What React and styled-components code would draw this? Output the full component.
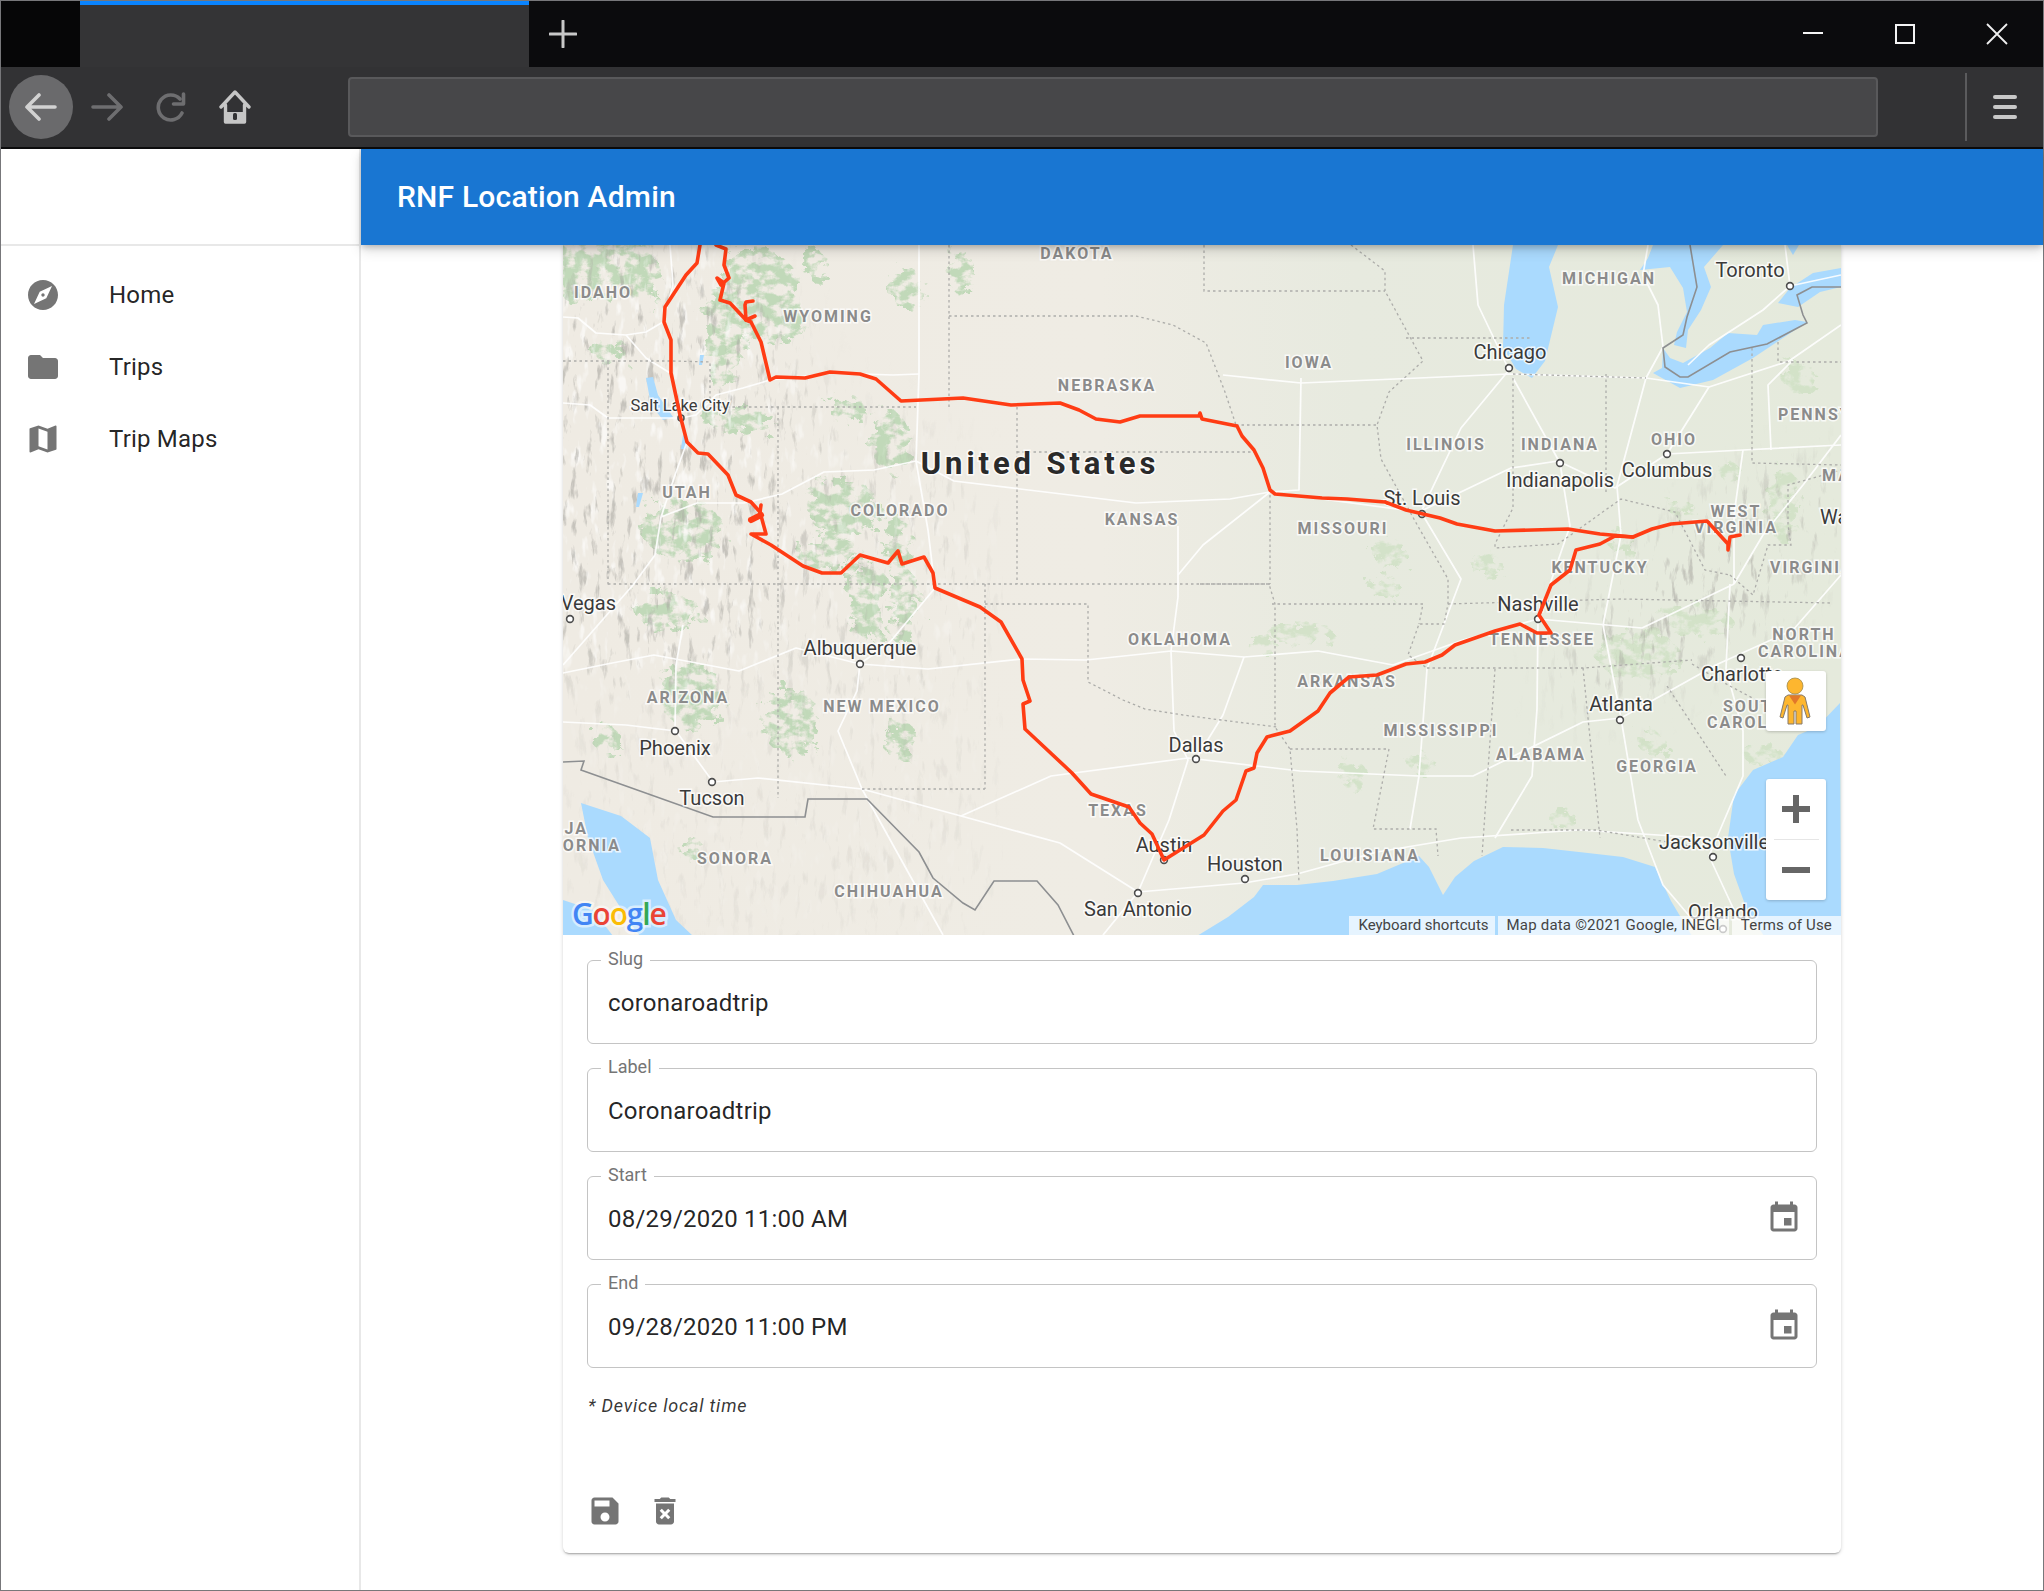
import React from 'react';
import styled, { createGlobalStyle } from 'styled-components';

const GlobalStyle = createGlobalStyle`
  html, body { margin: 0; padding: 0; background: #fff; overflow: hidden; }
  * { box-sizing: border-box; }
  body { font-family: Roboto, "Liberation Sans", sans-serif; }
`;

const Win = styled.div`
  width: 2044px;
  height: 1591px;
  display: flex;
  flex-direction: column;
  border: 1px solid #77777a;
  background: #fff;
`;

const TabBar = styled.div`
  height: 66px;
  display: flex;
  background: #0b0b0d;
`;

const TabGap = styled.div`
  width: 79px;
  background: #060607;
`;

const Tab = styled.div`
  width: 449px;
  background: #343436;
  border-top: 4px solid #0a84ff;
`;

const PlusBtn = styled.div`
  width: 68px;
  display: flex;
  align-items: center;
  justify-content: center;
`;

const TabSpacer = styled.div`
  flex: 1;
`;

const WinBtn = styled.div`
  width: 92px;
  display: flex;
  align-items: center;
  justify-content: center;
`;

const ToolBar = styled.div`
  height: 80px;
  display: flex;
  align-items: center;
  background: #323234;
  padding-left: 8px;
`;

const BackBtn = styled.div`
  width: 64px;
  height: 64px;
  border-radius: 50%;
  background: #6a6a6c;
  display: flex;
  align-items: center;
  justify-content: center;
  margin-right: 2px;
`;

const NavBtn = styled.div`
  width: 64px;
  height: 64px;
  display: flex;
  align-items: center;
  justify-content: center;
`;

const UrlBar = styled.div`
  flex: 1;
  height: 60px;
  margin-left: 81px;
  background: #474749;
  border: 2px solid #59595b;
  border-radius: 4px;
`;

const ToolSep = styled.div`
  width: 2px;
  height: 68px;
  margin-left: 87px;
  background: #5b5b5d;
`;

const MenuBtn = styled.div`
  width: 76px;
  display: flex;
  flex-direction: column;
  align-items: center;
  gap: 6px;
`;

const MenuLine = styled.span`
  width: 24px;
  height: 4px;
  border-radius: 2px;
  background: #c8c8c8;
`;

const ChromeEdge = styled.div`
  height: 2px;
  background: #0c0c0d;
`;

const Body = styled.div`
  flex: 1;
  display: flex;
  min-height: 0;
`;

const Sidebar = styled.aside`
  width: 360px;
  flex-shrink: 0;
  border-right: 2px solid #e8e8e8;
`;

const SideHead = styled.div`
  height: 97px;
  border-bottom: 2px solid #e8e8e8;
`;

const NavList = styled.nav`
  padding-top: 13px;
`;

const NavItem = styled.div`
  height: 72px;
  display: flex;
  align-items: center;
  padding-left: 24px;
  color: rgba(0, 0, 0, 0.87);
  font-size: 24px;
  letter-spacing: 0.2px;
`;

const NavIcon = styled.div`
  width: 84px;
  height: 36px;
  color: #757575;
`;

const Main = styled.main`
  flex: 1;
  min-width: 0;
  display: flex;
  flex-direction: column;
`;

const AppBar = styled.header`
  height: 96px;
  flex-shrink: 0;
  display: flex;
  align-items: center;
  padding: 0 0 2px 36px;
  background: #1976d2;
  color: #fff;
  font-size: 30px;
  font-weight: 500;
  letter-spacing: 0.2px;
  box-shadow: 0 3px 6px -1px rgba(0, 0, 0, 0.22), 0 6px 12px 0 rgba(0, 0, 0, 0.12);
  position: relative;
  z-index: 2;
`;

const Card = styled.section`
  width: 1278px;
  margin: 0 auto;
  border-radius: 0 0 6px 6px;
  box-shadow: 0 2px 2px -1px rgba(0, 0, 0, 0.3), 0 1px 4px 0 rgba(0, 0, 0, 0.14);
`;

const MapWrap = styled.div`
  position: relative;
  height: 690px;
  overflow: hidden;
`;

const MapSvg = styled.svg`
  display: block;
  width: 1278px;
  height: 690px;
`;

const StateName = styled.text`
  font-family: Roboto, sans-serif;
  font-size: 16px;
  font-weight: 700;
  letter-spacing: 2px;
  fill: #8b8b8b;
  stroke: rgba(255, 255, 255, 0.75);
  stroke-width: 3px;
  paint-order: stroke;
`;

const CityName = styled.text`
  font-family: Roboto, sans-serif;
  font-size: ${(p) => p.$size || 20}px;
  fill: #3a3a3a;
  stroke: rgba(255, 255, 255, 0.8);
  stroke-width: 3px;
  paint-order: stroke;
`;

const CountryName = styled.text`
  font-family: Roboto, sans-serif;
  font-size: 31px;
  font-weight: 700;
  letter-spacing: 3.9px;
  fill: #2a2a2a;
  stroke: rgba(255, 255, 255, 0.8);
  stroke-width: 3px;
  paint-order: stroke;
`;

const GoogleMark = styled.text`
  font-family: "Open Sans", Roboto, sans-serif;
  font-size: 30px;
  font-weight: 600;
  letter-spacing: -1.2px;
  stroke: rgba(255, 255, 255, 0.55);
  stroke-width: 5px;
  paint-order: stroke;
`;

const MapControl = styled.div`
  position: absolute;
  right: 15px;
  width: 60px;
  background: #fff;
  border-radius: 3px;
  box-shadow: 0 1px 3px rgba(0, 0, 0, 0.2);
`;

const PegBox = styled(MapControl)`
  top: 426px;
  height: 60px;
`;

const ZoomBox = styled(MapControl)`
  top: 534px;
  height: 121px;
  display: flex;
  flex-direction: column;
  align-items: center;
`;

const ZoomBtn = styled.div`
  height: 60px;
  display: flex;
  align-items: center;
  justify-content: center;
`;

const ZoomSep = styled.div`
  width: 45px;
  height: 1px;
  background: #e6e6e6;
`;

const Attribution = styled.div`
  position: absolute;
  right: 0;
  bottom: 0;
  height: 19px;
  display: flex;
  gap: 3px;
  font-size: 15px;
  line-height: 19px;
  letter-spacing: 0.2px;
  color: #444;
`;

const AttrItem = styled.span`
  padding: 0 9px;
  background: rgba(255, 255, 255, 0.7);
  white-space: nowrap;
`;

const ShortcutsItem = styled(AttrItem)`
  padding-right: 6px;
  letter-spacing: 0;
`;

const Form = styled.div`
  padding: 25px 24px 24px;
  display: flex;
  flex-direction: column;
  gap: 24px;
`;

const Field = styled.div`
  position: relative;
  height: 84px;
  padding: 0 14px 0 20px;
  display: flex;
  align-items: center;
  justify-content: space-between;
  border: 1.5px solid #c4c4c4;
  border-radius: 6px;
`;

const FieldLabel = styled.label`
  position: absolute;
  top: -14px;
  left: 13px;
  padding: 0 7px;
  background: #fff;
  font-size: 18px;
  line-height: 24px;
  color: #757575;
`;

const FieldValue = styled.div`
  position: relative;
  top: 1px;
  font-size: 24px;
  letter-spacing: 0.22px;
  color: rgba(0, 0, 0, 0.87);
`;

const Note = styled.div`
  height: 27px;
  padding-left: 1px;
  font-size: 18px;
  line-height: 27px;
  font-style: italic;
  letter-spacing: 0.8px;
  color: rgba(0, 0, 0, 0.8);
`;

const Actions = styled.div`
  display: flex;
  gap: 24px;
  margin-top: 50px;
`;

const Icon = styled.svg`
  display: block;
  width: 36px;
  height: 36px;
  fill: #757575;
`;

const MaterialIcon = ({ d }) => (
  <Icon viewBox="0 0 24 24">
    <path d={d} />
  </Icon>
);

const ICONS = {
  explore: 'M12 10.9c-.61 0-1.1.49-1.1 1.1s.49 1.1 1.1 1.1c.61 0 1.1-.49 1.1-1.1s-.49-1.1-1.1-1.1zM12 2C6.48 2 2 6.48 2 12s4.48 10 10 10 10-4.48 10-10S17.52 2 12 2zm2.19 12.19L6 18l3.81-8.19L18 6l-3.81 8.19z',
  folder: 'M10 4H4c-1.1 0-1.99.9-1.99 2L2 18c0 1.1.9 2 2 2h16c1.1 0 2-.9 2-2V8c0-1.1-.9-2-2-2h-8l-2-2z',
  map: 'M20.5 3l-.16.03L15 5.1 9 3 3.36 4.9c-.21.07-.36.25-.36.48V20.5c0 .28.22.5.5.5l.16-.03L9 18.9l6 2.1 5.64-1.9c.21-.07.36-.25.36-.48V3.5c0-.28-.22-.5-.5-.5zM15 19l-6-2.11V5l6 2.11V19z',
  event: 'M17 12h-5v5h5v-5zM16 1v2H8V1H6v2H5c-1.11 0-1.99.9-1.99 2L3 19c0 1.1.89 2 2 2h14c1.1 0 2-.9 2-2V5c0-1.1-.9-2-2-2h-1V1h-2zm3 18H5V8h14v11z',
  save: 'M17 3H5c-1.11 0-2 .9-2 2v14c0 1.1.89 2 2 2h14c1.1 0 2-.9 2-2V7l-4-4zm-5 16c-1.66 0-3-1.34-3-3s1.34-3 3-3 3 1.34 3 3-1.34 3-3 3zm3-10H5V5h10v4z',
  deleteForever: 'M6 19c0 1.1.9 2 2 2h8c1.1 0 2-.9 2-2V7H6v12zm2.46-7.12l1.41-1.41L12 12.59l2.12-2.12 1.41 1.41L13.41 14l2.12 2.12-1.41 1.41L12 15.41l-2.12 2.12-1.41-1.41L10.59 14l-2.13-2.12zM15.5 4l-1-1h-5l-1 1H5v2h14V4z',
};

const line = (pts) => 'M' + pts.map((p) => p.join(' ')).join('L');
const shape = (pts) => line(pts) + 'Z';

const WATER = [
  // gulf of mexico and atlantic
  [[520, 690], [600, 690], [634, 691], [665, 672], [691, 652], [700, 640], [734, 640], [770, 636], [814, 629], [840, 618], [856, 611], [866, 622], [880, 650], [892, 632], [911, 616], [940, 602], [980, 603], [1016, 607], [1060, 612], [1092, 622], [1108, 656], [1129, 691], [1201, 691], [1184, 665], [1171, 629], [1165, 593], [1171, 550], [1190, 525], [1220, 512], [1235, 490], [1254, 482], [1277, 458], [1278, 690], [1278, 700], [520, 700]],
  // gulf of california
  [[18, 558], [58, 571], [87, 593], [95, 635], [113, 675], [130, 691], [77, 691], [67, 678], [40, 635], [25, 593]],
  // pacific corner
  [[0, 655], [30, 665], [50, 691], [0, 691]],
  // lake michigan
  [[950, 0], [941, 60], [940, 102], [953, 124], [969, 133], [982, 116], [995, 62], [986, 22], [995, 0]],
  // lake huron
  [[1090, 0], [1085, 13], [1077, 25], [1107, 22], [1120, 43], [1124, 67], [1114, 87], [1111, 100], [1123, 103], [1125, 85], [1138, 65], [1148, 42], [1141, 22], [1160, 0]],
  // lake erie
  [[1100, 103], [1099, 123], [1090, 128], [1117, 143], [1150, 135], [1190, 113], [1244, 77], [1232, 75], [1200, 80], [1194, 90], [1165, 88], [1147, 103], [1120, 118], [1107, 113]],
  // lake ontario
  [[1278, 23], [1250, 28], [1227, 43], [1215, 58], [1235, 62], [1257, 47], [1278, 42]],
  // georgian bay sliver
  [[1224, 0], [1236, 0], [1230, 10]],
  // great salt lake and small western lakes
  [[83, 133], [90, 132], [95, 150], [110, 172], [100, 175], [88, 160]],
  [[120, 190], [124, 192], [123, 204], [118, 204]],
  [[75, 248], [80, 248], [76, 262], [73, 262]],
  [[137, 110], [141, 110], [139, 120], [136, 120]],
];

const GREENS = [
  [30, 20, 44, 30], [78, 25, 18, 32], [14, 48, 16, 10], [165, 80, 24, 46], [195, 38, 38, 34], [215, 72, 26, 28],
  [157, 112, 12, 34], [40, 105, 11, 10], [58, 106, 6, 10], [175, 175, 36, 13], [285, 165, 18, 13], [327, 196, 19, 30],
  [280, 263, 36, 28], [266, 308, 32, 18], [304, 343, 20, 24], [342, 352, 14, 28], [304, 375, 16, 24], [337, 379, 10, 20],
  [120, 285, 40, 30], [105, 366, 32, 18], [129, 450, 32, 32], [228, 477, 28, 34], [337, 495, 16, 20], [44, 495, 10, 16],
  [344, 44, 18, 20], [398, 26, 12, 24], [252, 20, 10, 16], [130, 605, 10, 12], [335, 300, 12, 28],
];

const EAST_GREENS = [
  [826, 308, 16, 15], [822, 343, 16, 11], [923, 320, 16, 11], [738, 388, 32, 10], [1075, 410, 40, 26], [1134, 375, 34, 16],
  [1220, 260, 15, 38], [1120, 265, 12, 10], [1167, 227, 10, 10], [1237, 133, 16, 15], [700, 400, 14, 8], [860, 520, 12, 10],
  [1000, 575, 14, 9], [1090, 500, 12, 12], [790, 530, 14, 14], [1200, 510, 20, 10], [1060, 300, 12, 10],
];

const BORDERS = [
  [[0, 116], [110, 116], [147, 117], [147, 162], [215, 162], [353, 162]],
  [[45, 117], [45, 340]],
  [[45, 339], [707, 339]],
  [[215, 162], [215, 553]],
  [[386, 0], [386, 162]],
  [[386, 71], [573, 71], [610, 80], [643, 98], [662, 147], [673, 180]],
  [[454, 162], [454, 339]],
  [[454, 207], [691, 207]],
  [[707, 250], [707, 339]],
  [[422, 339], [422, 544]],
  [[422, 359], [525, 359], [525, 437], [560, 455], [582, 464], [620, 470], [658, 475], [714, 482]],
  [[299, 544], [422, 544]],
  [[641, 0], [641, 46], [822, 46]],
  [[637, 339], [706, 339], [712, 359], [712, 482], [727, 504], [734, 584], [736, 638]],
  [[727, 504], [826, 504], [810, 584], [873, 584], [875, 611]],
  [[932, 424], [919, 611]],
  [[864, 423], [1020, 423], [1129, 415]],
  [[673, 180], [814, 180], [818, 214], [852, 276], [885, 334], [885, 359], [881, 379], [856, 379], [845, 410], [864, 423]],
  [[709, 359], [860, 359], [856, 379]],
  [[885, 359], [1058, 354], [1268, 358]],
  [[950, 133], [950, 263], [932, 299], [932, 303], [995, 299], [1058, 254], [1112, 267], [1142, 325], [1167, 330]],
  [[1043, 129], [1043, 250]],
  [[950, 129], [1083, 133]],
  [[1189, 103], [1189, 218], [1278, 220]],
  [[1215, 97], [1215, 117], [1278, 117]],
  [[843, 93], [967, 93]],
  [[788, 0], [822, 26], [822, 46], [860, 116], [826, 147], [814, 180]],
  [[1020, 423], [1037, 593]],
  [[948, 585], [1033, 585], [1134, 602]],
  [[1104, 441], [1163, 531]],
  [[1129, 419], [1165, 440], [1225, 472]],
  [[1167, 330], [1190, 350], [1205, 300], [1228, 300], [1225, 280], [1225, 240], [1278, 225]],
];

const FRONTIERS = [
  [[1127, 0], [1134, 42], [1124, 72], [1120, 90], [1100, 103], [1102, 122], [1117, 132], [1125, 132], [1167, 107], [1204, 99], [1244, 78], [1240, 70], [1234, 50], [1249, 42], [1278, 42]],
  [[0, 517], [21, 516], [18, 525], [150, 572], [242, 572], [245, 554], [304, 554], [356, 607], [370, 633], [400, 658], [412, 665], [431, 636], [474, 636], [495, 660], [511, 691]],
];

const ROADS = [
  [[0, 72], [15, 73], [33, 88], [63, 90], [83, 87], [100, 77], [110, 40], [107, 0]],
  [[63, 90], [83, 113], [107, 128], [118, 173]],
  [[0, 158], [27, 160], [45, 173], [83, 173], [118, 173], [133, 170], [153, 150], [180, 143], [207, 135], [270, 128], [330, 130], [356, 129]],
  [[118, 173], [124, 197], [112, 230], [98, 272], [134, 258], [181, 258], [219, 249], [261, 227], [311, 225], [353, 216], [391, 236], [507, 250], [573, 258], [667, 254], [707, 247], [856, 267], [948, 223], [995, 216], [1052, 243], [1104, 209], [1180, 205], [1278, 200]],
  [[98, 272], [92, 310], [70, 340], [0, 420]],
  [[356, 0], [356, 129], [353, 216], [365, 285], [372, 343], [327, 397], [297, 419], [294, 446], [275, 486], [299, 544]],
  [[0, 428], [44, 419], [91, 410], [176, 426], [233, 403], [297, 419], [365, 424], [459, 414], [523, 415], [608, 406], [681, 412], [755, 406], [830, 420], [900, 395], [975, 374], [1079, 383], [1171, 339]],
  [[0, 477], [63, 480], [113, 486], [150, 537], [195, 533], [299, 544], [398, 571], [488, 531], [625, 513], [737, 526], [856, 531], [910, 531], [1020, 477], [1058, 473], [1155, 419], [1230, 385], [1278, 330]],
  [[398, 571], [497, 598], [575, 647], [681, 638], [734, 629], [814, 607], [898, 593], [1016, 585], [1142, 593]],
  [[615, 281], [615, 352], [608, 406], [611, 486], [625, 515], [606, 575], [575, 647], [540, 690]],
  [[707, 247], [640, 300], [615, 330]],
  [[946, 125], [898, 183], [858, 267], [898, 334], [864, 424], [856, 531], [847, 584]],
  [[738, 138], [856, 133], [946, 129], [1083, 133], [1146, 142], [1226, 116], [1278, 80]],
  [[660, 130], [738, 138]],
  [[1083, 133], [1100, 102], [1095, 60], [1080, 30], [1085, 0]],
  [[1083, 133], [1054, 241], [1058, 290], [1040, 380], [1058, 473], [1075, 575], [1100, 640], [1134, 680]],
  [[950, 133], [997, 218], [1007, 281], [975, 374], [974, 464], [969, 531], [932, 593]],
  [[1167, 339], [1163, 424], [1180, 486], [1180, 531], [1146, 611], [1171, 665]],
  [[738, 133], [736, 245], [707, 247]],
  [[946, 125], [915, 60], [910, 0]],
  [[1104, 209], [1146, 142]],
  [[1227, 41], [1200, 65], [1146, 100], [1125, 120]],
  [[1278, 30], [1227, 41], [1222, 0]],
  [[1208, 205], [1205, 140], [1230, 115]],
  [[1171, 339], [1200, 290], [1240, 240], [1278, 190]],
  [[1171, 339], [1171, 270], [1180, 205]],
  [[681, 412], [660, 470], [633, 514]],
  [[299, 544], [330, 600], [380, 690]],
  [[112, 486], [113, 420], [120, 380]],
];

const ROUTE = [
  [[137, 0], [134, 18], [123, 30], [102, 62], [101, 77], [108, 95], [108, 128], [117, 170], [124, 197], [135, 208], [145, 209], [165, 230], [173, 250], [188, 257], [197, 267], [203, 289], [188, 289], [208, 300], [240, 321], [259, 328], [278, 328], [297, 310], [325, 318], [335, 306], [339, 319], [361, 312], [370, 328], [372, 343], [417, 362], [438, 377], [459, 414], [460, 435], [467, 456], [460, 459], [462, 484], [509, 528], [528, 549], [566, 562], [577, 578], [589, 589], [601, 615], [641, 590], [660, 566], [673, 555], [683, 526], [691, 523], [694, 508], [704, 492], [727, 486], [755, 466], [767, 448], [786, 432], [814, 430], [843, 419], [862, 417], [879, 410], [892, 400], [932, 386], [957, 379], [974, 388], [988, 388], [976, 370], [988, 340], [1007, 325], [1013, 305], [1037, 299], [1052, 291], [1070, 292]],
  [[153, 0], [163, 4], [161, 20], [166, 33], [158, 40], [154, 33], [161, 38], [157, 55], [167, 58], [183, 75], [188, 77], [198, 97], [207, 135], [213, 132], [242, 133], [267, 127], [297, 129], [313, 134], [338, 156], [400, 153], [448, 160], [497, 158], [516, 165], [533, 174], [557, 177], [577, 171], [636, 171], [637, 168], [639, 174], [674, 181], [679, 191], [691, 205], [700, 223], [707, 245], [712, 249], [759, 253], [784, 254], [822, 257], [843, 265], [877, 273], [894, 279], [932, 286], [1005, 284], [1037, 289], [1070, 292], [1089, 284], [1108, 279], [1144, 276], [1165, 299], [1165, 305], [1167, 292], [1177, 290]],
  [[183, 75], [182, 60], [183, 57], [190, 56]],
  [[183, 75], [192, 71]],
  [[188, 275], [198, 270]],
  [[197, 267], [198, 260]],
];

const CITIES = [
  ['Toronto', 1187, 25, 1227, 41],
  ['Chicago', 947, 107, 946, 123],
  ['Columbus', 1104, 225, 1104, 209],
  ['Indianapolis', 997, 235, 997, 218],
  ['St. Louis', 859, 253, 859, 269],
  ['Nashville', 975, 359, 975, 374],
  ['Albuquerque', 297, 403, 297, 419],
  ['Atlanta', 1058, 459, 1057, 475],
  ['Phoenix', 112, 503, 112, 486],
  ['Dallas', 633, 500, 633, 514],
  ['Tucson', 149, 553, 149, 537],
  ['Austin', 601, 600, 601, 615],
  ['Jacksonville', 1151, 597, 1150, 612],
  ['Houston', 682, 619, 682, 634],
  ['San Antonio', 575, 664, 575, 648],
  ['Orlando', 1160, 667, 1160, 684],
];

const STATES = [
  ['DAKOTA', 514, 8], ['IDAHO', 40, 47], ['WYOMING', 265, 71], ['NEBRASKA', 544, 140], ['IOWA', 746, 117],
  ['MICHIGAN', 1046, 33], ['ILLINOIS', 883, 199], ['INDIANA', 997, 199], ['OHIO', 1111, 194], ['UTAH', 124, 247],
  ['COLORADO', 337, 265], ['KANSAS', 579, 274], ['MISSOURI', 780, 283], ['WEST', 1173, 266], ['VIRGINIA', 1173, 282],
  ['KENTUCKY', 1037, 322], ['TENNESSEE', 979, 394], ['NORTH', 1241, 389], ['OKLAHOMA', 617, 394], ['ARKANSAS', 784, 436],
  ['ARIZONA', 125, 452], ['NEW MEXICO', 319, 461], ['MISSISSIPPI', 878, 485], ['ALABAMA', 978, 509], ['GEORGIA', 1094, 521],
  ['TEXAS', 555, 565], ['SONORA', 172, 613], ['LOUISIANA', 807, 610], ['CHIHUAHUA', 326, 646],
];

const STATES_CUT = [
  ['PENNSYLVANIA', 1215, 169], ['MARYLAND', 1259, 230], ['VIRGINIA', 1207, 322], ['CAROLINA', 1195, 406],
  ['SOUTH', 1160, 461], ['CAROLINA', 1144, 477],
];

const RoadMap = () => (
  <MapSvg viewBox="0 0 1278 690">
    <defs>
      <linearGradient id="land" x1="0" x2="1" y1="0" y2="0">
        <stop offset="0" stopColor="#efebe3" />
        <stop offset="0.42" stopColor="#efece4" />
        <stop offset="0.62" stopColor="#e7eadf" />
        <stop offset="1" stopColor="#e5eadc" />
      </linearGradient>
      <filter id="soft" x="-30%" y="-30%" width="160%" height="160%">
        <feGaussianBlur stdDeviation="30" />
      </filter>
      <mask id="westMask">
        <ellipse cx="300" cy="340" rx="120" ry="170" fill="#777" filter="url(#soft)" />
        <ellipse cx="90" cy="230" rx="160" ry="240" fill="#fff" filter="url(#soft)" />
        <rect x="0" y="450" width="420" height="240" fill="#3a3a3a" filter="url(#soft)" />
      </mask>
      <mask id="ridgeMask">
        <ellipse cx="1140" cy="340" rx="170" ry="62" fill="#fff" filter="url(#soft)" transform="rotate(-38 1140 340)" />
      </mask>
      <filter id="relief" x="0" y="0" width="100%" height="100%">
        <feTurbulence type="fractalNoise" baseFrequency="0.13 0.035" numOctaves="4" seed="11" />
        <feColorMatrix values="0 0 0 0 0.4  0 0 0 0 0.39  0 0 0 0 0.36  5.5 0 0 0 -3.3" />
      </filter>
      <filter id="reliefLight" x="0" y="0" width="100%" height="100%">
        <feTurbulence type="fractalNoise" baseFrequency="0.11 0.04" numOctaves="3" seed="4" />
        <feColorMatrix values="0 0 0 0 1  0 0 0 0 1  0 0 0 0 1  0 5 0 0 -2.9" />
      </filter>
      <filter id="rough" x="-30%" y="-30%" width="160%" height="160%">
        <feTurbulence type="fractalNoise" baseFrequency="0.08 0.1" numOctaves="4" seed="3" result="n" />
        <feDisplacementMap in="SourceGraphic" in2="n" scale="30" result="d" />
        <feColorMatrix in="n" values="0 0 0 0 0  0 0 0 0 0  0 0 0 0 0  0 5 0 0 -1.9" result="holes" />
        <feComposite in="d" in2="holes" operator="in" />
      </filter>
    </defs>

    <rect width="1278" height="690" fill="url(#land)" />
    <g filter="url(#rough)" fill="#b9d6b2" opacity="0.85">
      {GREENS.map(([cx, cy, rx, ry]) => (
        <ellipse key={`${cx}-${cy}`} cx={cx} cy={cy} rx={rx} ry={ry} />
      ))}
    </g>
    <g filter="url(#rough)" fill="#cfe1c4" opacity="0.8">
      {EAST_GREENS.map(([cx, cy, rx, ry]) => (
        <ellipse key={`${cx}-${cy}`} cx={cx} cy={cy} rx={rx} ry={ry} />
      ))}
    </g>
    <g mask="url(#westMask)">
      <rect width="440" height="690" filter="url(#reliefLight)" opacity="0.6" />
      <rect width="440" height="690" filter="url(#relief)" opacity="0.6" />
    </g>
    <g mask="url(#ridgeMask)">
      <rect x="950" y="180" width="328" height="320" filter="url(#relief)" opacity="0.6" />
    </g>

    <g fill="#aadafe">
      {WATER.map((pts, i) => (
        <path key={i} d={shape(pts)} />
      ))}
    </g>

    <g fill="none" stroke="#fff" strokeWidth="1.7" strokeLinejoin="round" opacity="0.9">
      {ROADS.map((pts, i) => (
        <path key={i} d={line(pts)} />
      ))}
    </g>
    <g fill="none" stroke="#adadaa" strokeWidth="1.3" strokeDasharray="2.500 3">
      {BORDERS.map((pts, i) => (
        <path key={i} d={line(pts)} />
      ))}
    </g>
    <g fill="none" stroke="#8d8f91" strokeWidth="1.6">
      {FRONTIERS.map((pts, i) => (
        <path key={i} d={line(pts)} />
      ))}
    </g>

    {STATES.map(([name, x, y]) => (
      <StateName key={`${name}-${x}`} x={x} y={y} textAnchor="middle" dominantBaseline="central">{name}</StateName>
    ))}
    {STATES_CUT.map(([name, x, y]) => (
      <StateName key={`${name}-${x}`} x={x} y={y} dominantBaseline="central">{name}</StateName>
    ))}
    <StateName x={25} y={583} textAnchor="end" dominantBaseline="central">BAJA</StateName>
    <StateName x={58} y={600} textAnchor="end" dominantBaseline="central">CALIFORNIA</StateName>

    <CountryName x={477} y={218} textAnchor="middle" dominantBaseline="central">United States</CountryName>

    {CITIES.map(([name, x, y, dx, dy]) => (
      <g key={name}>
        <CityName x={x} y={y} textAnchor="middle" dominantBaseline="central">{name}</CityName>
        <circle cx={dx} cy={dy} r="3.4" fill="#fff" stroke="#4d4d4d" strokeWidth="1.6" />
      </g>
    ))}
    <CityName $size={16.5} x={117} y={160} textAnchor="middle" dominantBaseline="central">Salt Lake City</CityName>
    <circle cx="118" cy="173" r="3" fill="#fff" stroke="#4d4d4d" strokeWidth="1.5" />
    <CityName x={53} y={358} textAnchor="end" dominantBaseline="central">Las Vegas</CityName>
    <circle cx="7" cy="374" r="3.4" fill="#fff" stroke="#4d4d4d" strokeWidth="1.6" />
    <CityName x={1138} y={429} dominantBaseline="central">Charlotte</CityName>
    <circle cx="1178" cy="413" r="3.4" fill="#fff" stroke="#4d4d4d" strokeWidth="1.6" />
    <CityName x={1257} y={272} dominantBaseline="central">Washington</CityName>

    <g fill="none" stroke="#ff3c14" strokeWidth="3.6" strokeLinejoin="round" strokeLinecap="round">
      {ROUTE.map((pts, i) => (
        <path key={i} d={line(pts)} strokeWidth={i === 4 ? 6 : undefined} />
      ))}
    </g>

    <GoogleMark x={9} y={680}>
      <tspan fill="#4285f4">G</tspan>
      <tspan fill="#ea4335">o</tspan>
      <tspan fill="#fbbc05">o</tspan>
      <tspan fill="#4285f4">g</tspan>
      <tspan fill="#34a853">l</tspan>
      <tspan fill="#ea4335">e</tspan>
    </GoogleMark>
  </MapSvg>
);

const Pegman = () => (
  <svg width="60" height="60" viewBox="0 0 60 60">
    <circle cx="29" cy="15" r="8" fill="#fdb62f" stroke="#a08a4c" strokeWidth="0.8" />
    <path d="M22 24h14l3 2 5 20-3 1-4-13-1 0v19h-6V40h-2v13h-6V34l-1 0-4 13-3-1 5-20z" fill="#fdb62f" stroke="#85796a" strokeWidth="1" strokeLinejoin="round" />
    <path d="M23 24.500h12l-6 9z" fill="#e2772a" />
  </svg>
);

const PlusGlyph = ({ w, color, h }) => (
  <svg width={w} height={w} viewBox="0 0 28 28">
    {h ? null : <rect x="11" y="0" width="6" height="28" fill={color} />}
    <rect x="0" y="11" width="28" height="6" fill={color} />
  </svg>
);

const Field_ = ({ label, value, picker }) => (
  <Field>
    <FieldLabel>{label}</FieldLabel>
    <FieldValue>{value}</FieldValue>
    {picker && <MaterialIcon d={ICONS.event} />}
  </Field>
);

const App = () => (
  <>
    <GlobalStyle />
    <Win>
      <TabBar>
        <TabGap />
        <Tab />
        <PlusBtn>
          <svg width="28" height="28" viewBox="0 0 28 28">
            <path d="M14 1v26M1 14h26" stroke="#c8c8c8" strokeWidth="3" strokeLinecap="round" />
          </svg>
        </PlusBtn>
        <TabSpacer />
        <WinBtn>
          <svg width="20" height="20" viewBox="0 0 20 20">
            <path d="M0 9h20" stroke="#f4f4f4" strokeWidth="2" />
          </svg>
        </WinBtn>
        <WinBtn>
          <svg width="20" height="20" viewBox="0 0 20 20">
            <rect x="1" y="1" width="18" height="18" fill="none" stroke="#f4f4f4" strokeWidth="2" />
          </svg>
        </WinBtn>
        <WinBtn>
          <svg width="22" height="22" viewBox="0 0 22 22">
            <path d="M1 1l20 20M21 1L1 21" stroke="#f0f0f0" strokeWidth="1.8" />
          </svg>
        </WinBtn>
      </TabBar>
      <ToolBar>
        <BackBtn>
          <svg width="32" height="28" viewBox="0 0 32 28" fill="none" stroke="#d2d2d2" strokeWidth="3.6" strokeLinecap="round" strokeLinejoin="round">
            <path d="M30 14H3M14 2L2 14l12 12" />
          </svg>
        </BackBtn>
        <NavBtn>
          <svg width="32" height="28" viewBox="0 0 32 28" fill="none" stroke="#6e6e70" strokeWidth="3.6" strokeLinecap="round" strokeLinejoin="round">
            <path d="M2 14h27M18 2l12 12-12 12" />
          </svg>
        </NavBtn>
        <NavBtn>
          <svg width="32" height="30" viewBox="0 0 32 30" fill="none" stroke="#6e6e70" strokeWidth="3.6" strokeLinecap="round" strokeLinejoin="round">
            <path d="M25 7A12.5 12.5 0 1 0 27 21" />
            <path d="M28.5 2v10h-10" />
          </svg>
        </NavBtn>
        <NavBtn>
          <svg width="32" height="34" viewBox="0 0 32 34">
            <path d="M2 17L16 2l14 15M6.500 15v17h19V15" fill="none" stroke="#c6c6c6" strokeWidth="3.4" strokeLinecap="round" strokeLinejoin="round" />
            <path d="M6 22h20v11H6z" fill="#c6c6c6" />
            <rect x="14" y="23" width="4" height="7" rx="1.5" fill="#323234" />
          </svg>
        </NavBtn>
        <UrlBar />
        <ToolSep />
        <MenuBtn>
          <MenuLine />
          <MenuLine />
          <MenuLine />
        </MenuBtn>
      </ToolBar>
      <ChromeEdge />
      <Body>
        <Sidebar>
          <SideHead />
          <NavList>
            <NavItem><NavIcon><MaterialIcon d={ICONS.explore} /></NavIcon>Home</NavItem>
            <NavItem><NavIcon><MaterialIcon d={ICONS.folder} /></NavIcon>Trips</NavItem>
            <NavItem><NavIcon><MaterialIcon d={ICONS.map} /></NavIcon>Trip Maps</NavItem>
          </NavList>
        </Sidebar>
        <Main>
          <AppBar>RNF Location Admin</AppBar>
          <Card>
            <MapWrap>
              <RoadMap />
              <PegBox><Pegman /></PegBox>
              <ZoomBox>
                <ZoomBtn><PlusGlyph w={28} color="#666" /></ZoomBtn>
                <ZoomSep />
                <ZoomBtn><PlusGlyph w={28} color="#666" h /></ZoomBtn>
              </ZoomBox>
              <Attribution>
                <ShortcutsItem>Keyboard shortcuts</ShortcutsItem>
                <AttrItem>Map data ©2021 Google, INEGI</AttrItem>
                <AttrItem>Terms of Use</AttrItem>
              </Attribution>
            </MapWrap>
            <Form>
              <Field_ label="Slug" value="coronaroadtrip" />
              <Field_ label="Label" value="Coronaroadtrip" />
              <Field_ label="Start" value="08/29/2020 11:00 AM" picker />
              <Field_ label="End" value="09/28/2020 11:00 PM" picker />
              <Note>* Device local time</Note>
              <Actions>
                <MaterialIcon d={ICONS.save} />
                <MaterialIcon d={ICONS.deleteForever} />
              </Actions>
            </Form>
          </Card>
        </Main>
      </Body>
    </Win>
  </>
);

export default App;
